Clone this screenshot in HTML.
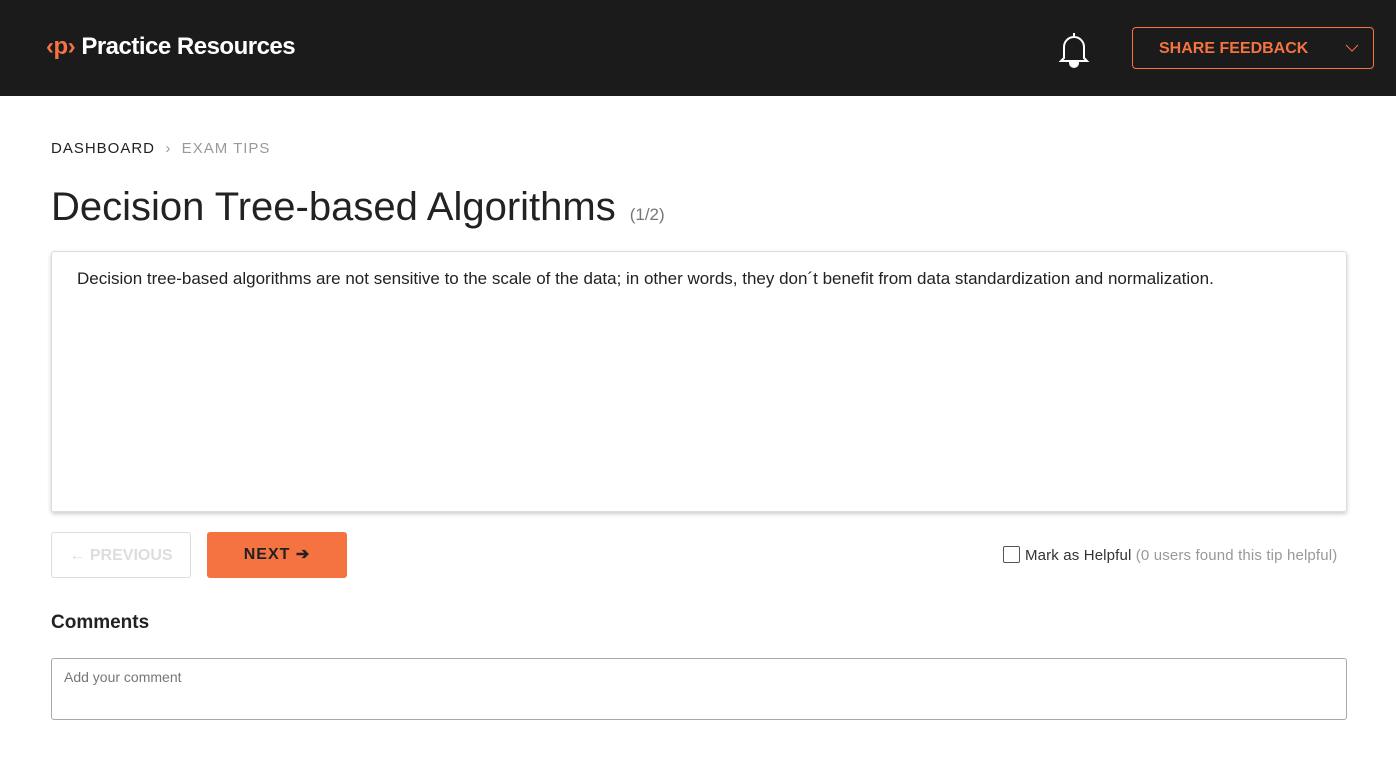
<!DOCTYPE html>
<html><head><style>
*{box-sizing:border-box;margin:0;padding:0}
body{width:1396px;height:775px;background:#fff;font-family:"Liberation Sans",sans-serif;position:relative;overflow:hidden;color:#222}
.hdr{position:absolute;left:0;top:0;width:1396px;height:96px;background:#1b1b1b}
.logo{position:absolute;left:46px;top:33px;font-size:24px;font-weight:bold;color:#fff;letter-spacing:-0.5px}
.logo span{color:#f47340}
.bell{position:absolute;left:1058px;top:30px}
.share{position:absolute;left:1132px;top:27px;width:242px;height:42px;border:1px solid #f47340;border-radius:4px;color:#f47340;font-weight:bold;font-size:16px;line-height:42px;padding-left:26px}
.share svg{position:absolute;right:14px;top:16px}
.crumb{position:absolute;left:51px;top:140px;font-size:15px;letter-spacing:1px}
.crumb .g{color:#999}
h1{position:absolute;left:51px;top:185px;font-size:40px;font-weight:normal;color:#222}
h1 small{font-size:17px;color:#777;margin-left:14px}
.box{position:absolute;left:51px;top:251px;width:1296px;height:261px;border:1px solid #ddd;border-radius:3px;box-shadow:0 2px 4px rgba(0,0,0,.2);padding:17px 25px;font-size:17px}
.prev{position:absolute;left:51px;top:532px;width:140px;height:46px;border:1px solid #ddd;border-radius:3px;color:#ddd;font-weight:bold;font-size:16px;line-height:46px;text-align:center}
.next{position:absolute;left:207px;top:532px;width:140px;height:46px;background:#f47340;border-radius:3px;color:#222;font-size:16px;font-weight:bold;line-height:46px;text-align:center;letter-spacing:1px}
.help{position:absolute;left:1003px;top:546px;font-size:15px;color:#333;letter-spacing:0.15px}
.help i{display:inline-block;width:17px;height:17px;border:1px solid #555;border-radius:2px;vertical-align:-3px;margin-right:5px}
.help span{color:#999}
.cm{position:absolute;left:51px;top:612px;font-size:19px;font-weight:bold;color:#222}
.ta{position:absolute;left:51px;top:658px;width:1296px;height:62px;border:1px solid #aaa;border-radius:3px;padding:10px 12px;font-size:14px;color:#777}
</style></head><body>
<div class="hdr">
<div class="logo"><span>‹p›</span> Practice Resources</div>
<svg class="bell" width="32" height="38" viewBox="0 0 32 38" fill="none" stroke="#fff" stroke-width="2"><path d="M16 3v3M6 28V17a10 10 0 0120 0v11l3 3H3z"/><path d="M12 33a4 4 0 008 0z" fill="#fff"/></svg>
<div class="share">SHARE FEEDBACK<svg width="14" height="8" viewBox="0 0 14 8"><path d="M1 1l6 6 6-6" stroke="#f47340" fill="none"/></svg></div>
</div>
<div class="crumb">DASHBOARD <span class="g">&nbsp;›&nbsp; EXAM TIPS</span></div>
<h1>Decision Tree-based Algorithms<small>(1/2)</small></h1>
<div class="box">Decision tree-based algorithms are not sensitive to the scale of the data; in other words, they don´t benefit from data standardization and normalization.</div>
<div class="prev">&#8592; PREVIOUS</div>
<div class="next">NEXT ➔</div>
<div class="help"><i></i>Mark as Helpful <span>(0 users found this tip helpful)</span></div>
<div class="cm">Comments</div>
<div class="ta">Add your comment</div>
</body></html>
